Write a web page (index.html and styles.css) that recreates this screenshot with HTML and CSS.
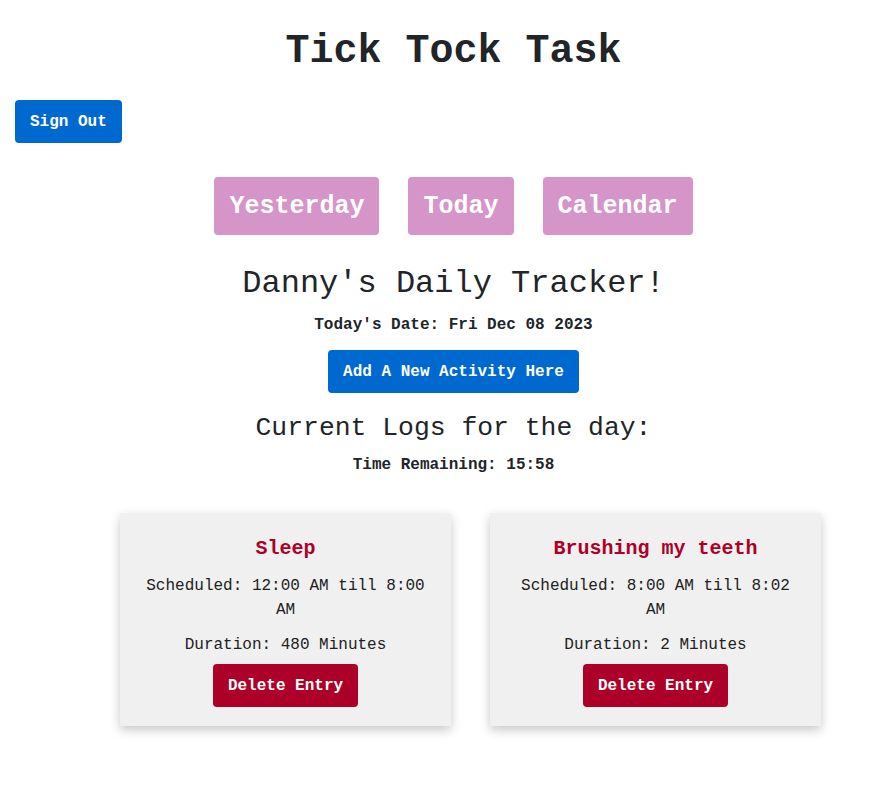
FILE: index.html
```html
<!DOCTYPE html>
<html>
<head>
<meta charset="utf-8">
<link rel="stylesheet" href="styles.css">
</head>
<body>
<h1 class="title">Tick Tock Task</h1>
<div class="signout-row"><button class="btn btn-blue">Sign Out</button></div>
<nav class="nav">
  <button class="nav-btn">Yesterday</button>
  <button class="nav-btn">Today</button>
  <button class="nav-btn">Calendar</button>
</nav>
<h2 class="tracker">Danny's Daily Tracker!</h2>
<p class="date">Today's Date: Fri Dec 08 2023</p>
<div class="center"><button class="btn btn-blue">Add A New Activity Here</button></div>
<h3 class="logs">Current Logs for the day:</h3>
<p class="remaining">Time Remaining: 15:58</p>
<div class="cards">
  <div class="card">
    <h4 class="card-title">Sleep</h4>
    <p class="card-text">Scheduled: 12:00 AM till 8:00 AM</p>
    <p class="card-text dur">Duration: 480 Minutes</p>
    <button class="btn btn-red">Delete Entry</button>
  </div>
  <div class="card">
    <h4 class="card-title">Brushing my teeth</h4>
    <p class="card-text">Scheduled: 8:00 AM till 8:02 AM</p>
    <p class="card-text dur">Duration: 2 Minutes</p>
    <button class="btn btn-red">Delete Entry</button>
  </div>
</div>
</body>
</html>
```

FILE: styles.css
```css
html, body {
  margin: 0;
  padding: 0;
  background: #ffffff;
}
body {
  font-family: "Liberation Mono", "Courier New", monospace;
  color: #212529;
  text-align: center;
  padding: 0 0 60px 15px;
}
.title {
  margin: 29px 0 0;
  font-size: 40px;
  line-height: 46px;
  font-weight: bold;
}
.signout-row {
  text-align: left;
  margin-top: 25px;
}
.btn {
  font-family: "Liberation Mono", "Courier New", monospace;
  font-size: 16px;
  font-weight: bold;
  color: #ffffff;
  border: none;
  border-radius: 4px;
  padding: 1px 15px 0;
  height: 43px;
  line-height: 42px;
  cursor: pointer;
}
.btn-blue {
  background: #0069d0;
}
.btn-red {
  background: #ad0029;
}
.nav {
  display: flex;
  justify-content: center;
  gap: 29px;
  margin-top: 34px;
}
.nav-btn {
  font-family: "Liberation Mono", "Courier New", monospace;
  font-size: 25px;
  font-weight: bold;
  color: #ffffff;
  background: #d595c8;
  border: none;
  border-radius: 4px;
  height: 58px;
  padding: 0 15px;
}
.tracker {
  margin: 31px 0 0;
  font-size: 32px;
  line-height: 36px;
  font-weight: normal;
}
.date {
  margin: 14px 0 0;
  font-size: 16px;
  line-height: 18px;
  font-weight: bold;
}
.center {
  margin-top: 16px;
}
.logs {
  margin: 20px 0 0;
  font-size: 26.4px;
  line-height: 30px;
  font-weight: normal;
}
.remaining {
  margin: 13px 0 0;
  font-size: 16px;
  line-height: 18px;
  font-weight: bold;
}
.cards {
  display: flex;
  gap: 39px;
  padding-left: 105px;
  margin-top: 39px;
}
.card {
  width: 331px;
  box-sizing: border-box;
  padding: 20px 20px 19px;
  background: #f0f0f0;
  box-shadow: 0 4px 10px rgba(0, 0, 0, 0.22);
}
.card-title {
  margin: 4px 0 0;
  font-size: 20px;
  line-height: 24px;
  font-weight: bold;
  color: #ad0029;
}
.card-text {
  margin: 13px 0 0;
  font-size: 16px;
  line-height: 24px;
  color: #212121;
}
.card-text.dur {
  margin-top: 11px;
}
.card .btn {
  margin-top: 7px;
}
```
